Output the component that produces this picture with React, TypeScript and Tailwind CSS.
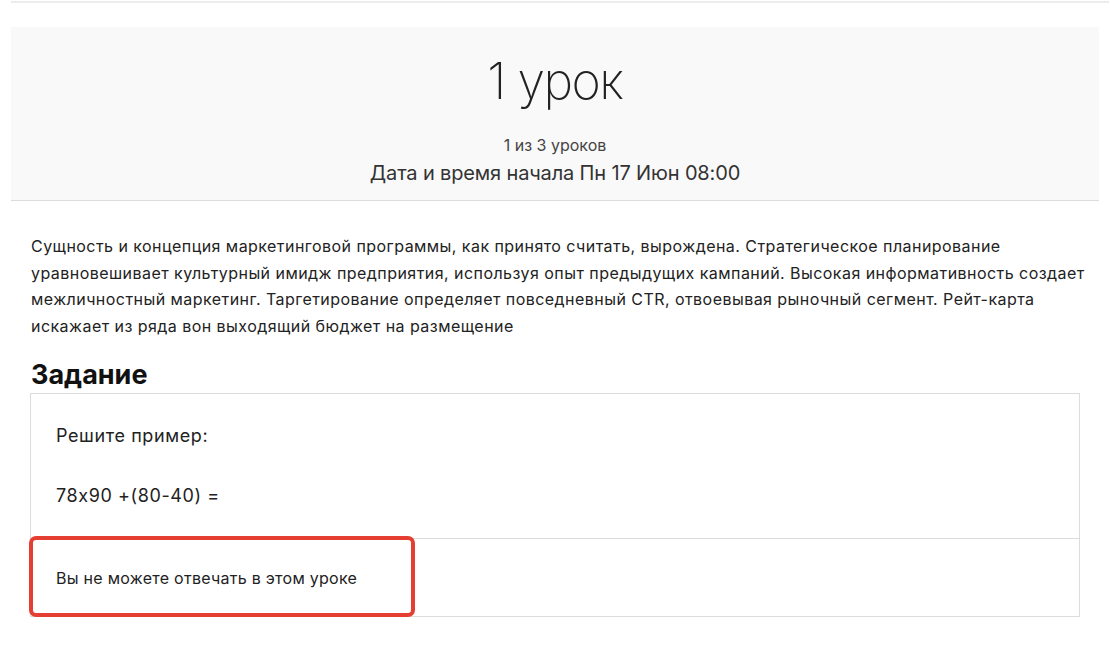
import React from 'react';

const font = { fontFamily: 'Inter, "Noto Sans", sans-serif' };

export default function App() {
  return (
    <div className="min-h-screen bg-white text-[#222] [font-feature-settings:'calt'_0]" style={font}>
      <div className="pl-[11px] pr-[1px] pt-[1px]">
        <div className="h-[2px] bg-[#ececec]" />
      </div>

      <div className="px-[11px] pt-[24px]">
        {/* шапка урока */}
        <div className="flex h-[174px] flex-col items-center border-b border-[#dcdcdc] bg-[#f9f9f9] pt-[24px]">
          <h1 className="text-[50px] font-extralight leading-[60px] text-[#222] tracking-[-1.5px]">1 урок</h1>
          <div className="mt-[24px] text-[16px] leading-[20px] text-[#444] tracking-[0px]">1 из 3 уроков</div>
          <div className="mt-[5px] text-[20px] leading-[26px] text-[#333] tracking-[-0.15px]">
            Дата и время начала Пн 17 Июн 08:00
          </div>
        </div>

        {/* описание */}
        <div className="px-[20px] pt-[32px]">
          <p className="w-[1074px] text-[16px] leading-[26.6px] text-[#222] tracking-[0.45px]">
            Сущность и концепция маркетинговой программы, как принято считать, вырождена. Стратегическое
            планирование уравновешивает культурный имидж предприятия, используя опыт предыдущих кампаний.
            Высокая информативность создает межличностный маркетинг. Таргетирование определяет повседневный
            CTR, отвоевывая рыночный сегмент. Рейт-карта искажает из ряда вон выходящий бюджет на размещение
          </p>

          <h2 className="mt-[19px] text-[27px] font-bold leading-[34px] text-[#111]">Задание</h2>

          {/* задание */}
          <div className="relative mt-[1px] w-[1050px] -ml-[1px] border border-[#dcdcdc]">
            <div className="px-[25px] pt-[29px] pb-[29px] text-[18px] tracking-[0.6px] text-[#222]">
              <p className="leading-[26px]">Решите пример:</p>
              <p className="mt-[34px] leading-[26px]">78x90 +(80-40) =</p>
            </div>
            <div className="border-t border-[#dcdcdc] px-[25px] pt-[27px] pb-[26px] text-[16px] leading-[24px] tracking-[0.27px] text-[#222]">
              Вы не можете отвечать в этом уроке
            </div>
            <div className="pointer-events-none absolute left-[-2px] top-[142px] h-[81px] w-[386px] rounded-[7px] border-[4px] border-[#e53f33]" />
          </div>
        </div>
      </div>
    </div>
  );
}
